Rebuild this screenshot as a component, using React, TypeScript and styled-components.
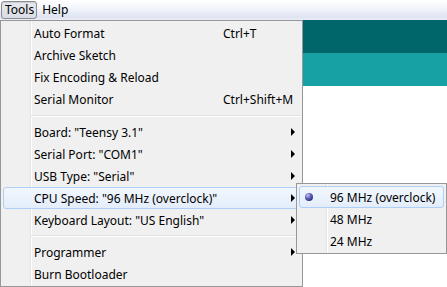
import React from "react";
import styled, { createGlobalStyle } from "styled-components";

const Global = createGlobalStyle`
  html, body { margin: 0; padding: 0; background: #fff; overflow: hidden; }
  body { font-family: "Segoe UI", "Noto Sans", "Liberation Sans", sans-serif; font-size: 12px; color: #000; }
`;

const Page = styled.div`
  width: 447px;
  height: 287px;
  display: flex;
  flex-direction: column;
  background: #fff;
  overflow: hidden;
`;

const MenuBar = styled.div`
  height: 20px;
  flex: none;
  display: flex;
  align-items: center;
  gap: 1px;
  padding-left: 1px;
  box-sizing: border-box;
  background: linear-gradient(#ffffff 0%, #f5f7fc 35%, #dfe4f2 85%, #e9edf7 100%);
`;

const BarItem = styled.div<{ $open?: boolean }>`
  height: 16px;
  line-height: 15px;
  padding: 0 2px 0 3px;
  border: 1px solid ${(p) => (p.$open ? "#8a8c91" : "transparent")};
  border-radius: 3px;
  background: ${(p) => (p.$open ? "linear-gradient(#e6e9ef, #dadde5)" : "transparent")};
  box-shadow: ${(p) => (p.$open ? "inset 0 1px 1px rgba(0,0,0,0.12)" : "none")};
`;

const Workspace = styled.div`
  position: relative;
  flex: 1;
`;

const Band = styled.div<{ $color: string; $h: number }>`
  height: ${(p) => p.$h}px;
  background: ${(p) => p.$color};
`;

const Menu = styled.div<{ $left: number; $top: number; $width: number; $pad: number }>`
  position: absolute;
  left: ${(p) => p.$left}px;
  top: ${(p) => p.$top}px;
  width: ${(p) => p.$width}px;
  box-sizing: border-box;
  border: 1px solid #979797;
  padding: ${(p) => p.$pad}px 0 1px 0;
  background-color: #f0f0f0;
  background-image: linear-gradient(
    to right,
    transparent 29px,
    #e2e3e3 29px,
    #e2e3e3 30px,
    #ffffff 30px,
    #ffffff 31px,
    transparent 31px
  );
  display: flex;
  flex-direction: column;
`;

const Row = styled.div<{ $hot?: boolean }>`
  position: relative;
  height: 22px;
  margin: 0 2px;
  box-sizing: border-box;
  display: grid;
  grid-template-columns: 31px 188px 1fr 4px;
  align-items: center;
  padding-right: 4px;
  border: 1px solid ${(p) => (p.$hot ? "#aecff7" : "transparent")};
  border-radius: 3px;
  background: ${(p) => (p.$hot ? "linear-gradient(#f2f7fd, #e3edfa)" : "transparent")};
  white-space: nowrap;
`;

const IconCell = styled.div`
  height: 100%;
  display: flex;
  align-items: center;
  margin-left: -1px;
`;

const Label = styled.span`
  margin-left: -1px;
`;

const Shortcut = styled.span``;

const Arrow = styled.span`
  width: 0;
  height: 0;
  border-left: 4px solid #000;
  border-top: 4px solid transparent;
  border-bottom: 4px solid transparent;
  margin-right: -1px;
`;

const Bullet = styled.span`
  width: 8px;
  height: 8px;
  border-radius: 50%;
  margin-left: 6px;
  background: radial-gradient(circle at 35% 30%, #c9c9ef 0%, #6a6ac0 35%, #2e2e86 75%, #1f1f6a 100%);
`;

const Separator = styled.div<{ $top: number }>`
  height: 10px;
  margin: ${(p) => p.$top}px 2px 0 30px;
  box-sizing: border-box;
  padding-top: 4px;
  &::before {
    content: "";
    display: block;
    height: 1px;
    background: #e0e0e0;
    border-bottom: 1px solid #ffffff;
  }
`;

type Item = { label: string; shortcut?: string; sub?: boolean; hot?: boolean };

const group1: Item[] = [
  { label: "Auto Format", shortcut: "Ctrl+T" },
  { label: "Archive Sketch" },
  { label: "Fix Encoding & Reload" },
  { label: "Serial Monitor", shortcut: "Ctrl+Shift+M" },
];
const group2: Item[] = [
  { label: 'Board: "Teensy 3.1"', sub: true },
  { label: 'Serial Port: "COM1"', sub: true },
  { label: 'USB Type: "Serial"', sub: true },
  { label: 'CPU Speed: "96 MHz (overclock)"', sub: true, hot: true },
  { label: 'Keyboard Layout: "US English"', sub: true },
];
const group3: Item[] = [{ label: "Programmer", sub: true }, { label: "Burn Bootloader" }];

const MenuRow = ({ item }: { item: Item }) => (
  <Row $hot={item.hot}>
    <IconCell />
    <Label>{item.label}</Label>
    <Shortcut>{item.shortcut ?? ""}</Shortcut>
    {item.sub ? <Arrow /> : <span />}
  </Row>
);

const SubRow = styled(Row)`
  grid-template-columns: 31px 1fr;
`;

const speeds = ["96 MHz (overclock)", "48 MHz", "24 MHz"];

export default function App() {
  return (
    <Page>
      <Global />
      <MenuBar>
        <BarItem $open>Tools</BarItem>
        <BarItem>Help</BarItem>
      </MenuBar>
      <Workspace>
        <Band $color="#01666a" $h={33} />
        <Band $color="#17a1a5" $h={33} />
        <Menu $left={0} $top={0} $width={303} $pad={1}>
          {group1.map((it) => (
            <MenuRow key={it.label} item={it} />
          ))}
          <Separator $top={1} />
          {group2.map((it) => (
            <MenuRow key={it.label} item={it} />
          ))}
          <Separator $top={0} />
          {group3.map((it) => (
            <MenuRow key={it.label} item={it} />
          ))}
        </Menu>
        <Menu $left={296} $top={163} $width={151} $pad={2}>
          {speeds.map((s, i) => (
            <SubRow key={s} $hot={i === 0}>
              <IconCell>{i === 0 ? <Bullet /> : null}</IconCell>
              <Label>{s}</Label>
            </SubRow>
          ))}
        </Menu>
      </Workspace>
    </Page>
  );
}
